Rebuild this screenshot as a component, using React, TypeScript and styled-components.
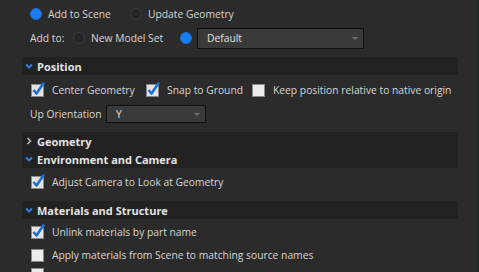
import React from 'react';
import styled, { createGlobalStyle } from 'styled-components';

const Global = createGlobalStyle`
html, body {
  margin: 0;
  padding: 0;
  background: #2b2b2b;
}
body {
  font-family: "Open Sans", "DejaVu Sans", sans-serif;
  font-size: 10.3px;
  color: #d6d6d6;
}
`

const Frame = styled.div`
width: 479px;
height: 272px;
overflow: hidden;
display: flex;
background: #2b2b2b;
`
const Panel = styled.div`
flex: 1;
padding: 2px 19px 0 22px;
display: flex;
flex-direction: column;
`
const EdgeStrip = styled.div`
width: 2px;
background: #1d262b;
`
const Row = styled.div<{h?: number, pad?: number}>`
height: ${({h}) => h || 24}px;
box-sizing: border-box;
padding-top: ${({pad}) => pad ?? 0}px;
display: flex;
align-items: center;
padding-left: 8px;
flex-shrink: 0;
`
const Label = styled.span<{w?: number}>`
white-space: nowrap;
${({w}) => w ? `width: ${w}px;` : ''}
`
const Option = styled.label<{w?: number}>`
display: flex;
align-items: center;
gap: 6px;
white-space: nowrap;
${({w}) => w ? `width: ${w}px;` : ''}
`
const RadioDot = styled.span<{on?: boolean}>`
width: 12px;
height: 12px;
border-radius: 50%;
box-sizing: border-box;
background: ${({on}) => (on ? '#1a7cf2' : '#262626')};
border: 1px solid ${({on}) => (on ? '#1670da' : '#3d3d3d')};
flex-shrink: 0;
`
const Spacer = styled.span<{w: number}>`
width: ${({w}) => w}px;
flex-shrink: 0;
`
const Select = styled.div<{w: number, h: number}>`
width: ${({w}) => w}px;
height: ${({h}) => h}px;
box-sizing: border-box;
border: 1px solid #0f0f0f;
background: #3a3a3a;
display: flex;
align-items: center;
justify-content: space-between;
padding: 0 5px 0 9px;
color: #e0e0e0;
&::after {
  content: "";
  border-left: 3px solid transparent;
  border-right: 3px solid transparent;
  border-top: 3px solid #6d6d6d;
}
`
const Header = styled.div<{top?: number, round?: string}>`
height: 18px;
margin-top: ${({top}) => top ?? 0}px;
background: #222222;
display: flex;
align-items: center;
gap: 4px;
padding-left: 3px;
font-weight: 700;
font-size: 11px;
color: #e2e2e2;
flex-shrink: 0;
border-radius: ${({round}) => round || '2px'};
`

const Chevron = ({open}: {open?: boolean}) => (
  <svg width="8" height="8" viewBox="0 0 8 8">
    {open
      ? <path d="M1 2.5 L4 5.5 L7 2.5" fill="none" stroke="#2a86ee" strokeWidth="1.8" />
      : <path d="M2.5 1 L5.5 4 L2.5 7" fill="none" stroke="#bdbdbd" strokeWidth="1.5" />}
  </svg>
)

const Check = ({on}: {on?: boolean}) => (
  <svg width="16" height="16" viewBox="0 0 16 16" style={{ flexShrink: 0, marginTop: -2 }}>
    <rect x="1.5" y="3.5" width="12" height="12" fill={on ? '#e4e4e4' : '#ececec'} stroke="#8a8a8a" strokeWidth="1" />
    {on && <path d="M3.5 9 L6.5 12.5 L14 1.5" fill="none" stroke="#1b6fd6" strokeWidth="2.6" strokeLinejoin="round" />}
  </svg>
)

const App = () => {
  return (
    <Frame>
      <Global />
      <Panel>
        <Row>
          <Option w={100}><RadioDot on />Add to Scene</Option>
          <Option><RadioDot />Update Geometry</Option>
        </Row>
        <Row>
          <Label w={43}>Add to:</Label>
          <Option w={107}><RadioDot />New Model Set</Option>
          <RadioDot on />
          <Spacer w={5} />
          <Select w={167} h={21}>Default</Select>
        </Row>
        <Header top={7}><Chevron open />Position</Header>
        <Row h={28} pad={2}>
          <Option w={115}><Check on />Center Geometry</Option>
          <Option w={106}><Check on />Snap to Ground</Option>
          <Option><Check />Keep position relative to native origin</Option>
        </Row>
        <Row h={22}>
          <Label w={76}>Up Orientation</Label>
          <Select w={100} h={18}>Y</Select>
        </Row>
        <Header top={7} round="2px 2px 0 0"><Chevron />Geometry</Header>
        <Header round="0 0 2px 2px"><Chevron open />Environment and Camera</Header>
        <Row h={28}>
          <Option><Check on />Adjust Camera to Look at Geometry</Option>
        </Row>
        <Header top={5}><Chevron open />Materials and Structure</Header>
        <Row h={26}>
          <Option><Check on />Unlink materials by part name</Option>
        </Row>
        <Row h={20}>
          <Option><Check />Apply materials from Scene to matching source names</Option>
        </Row>
        <Row h={18}>
          <Option><Check /></Option>
        </Row>
      </Panel>
      <EdgeStrip />
    </Frame>
  );
}

export default App;
